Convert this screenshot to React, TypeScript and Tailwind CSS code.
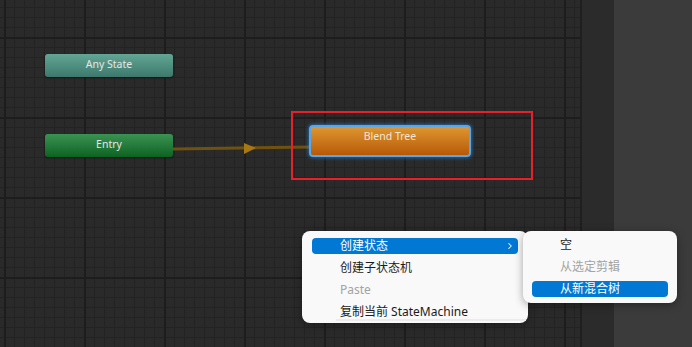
import { ChevronRight } from "lucide-react";

const grid =
  "bg-[#2a2a2a] bg-[linear-gradient(to_right,#1d1d1d_2px,transparent_2px),linear-gradient(to_bottom,#1d1d1d_2px,transparent_2px),linear-gradient(to_right,#232323_1px,transparent_1px),linear-gradient(to_bottom,#232323_1px,transparent_1px)] bg-size-[80px_80px,80px_80px,10px_10px,10px_10px] bg-position-[4px_37px]";

type Item = { label: string; disabled?: boolean; active?: boolean; sub?: boolean };

const mainItems: Item[] = [
  { label: "创建状态", active: true, sub: true },
  { label: "创建子状态机" },
  { label: "Paste", disabled: true },
  { label: "复制当前 StateMachine" },
];

const subItems: Item[] = [
  { label: "空" },
  { label: "从选定剪辑", disabled: true },
  { label: "从新混合树", active: true },
];

function MenuRow({ item, inset }: { item: Item; inset: string }) {
  return (
    <div className={`${inset} py-[3px]`}>
      <div
        className={`flex h-[16px] items-center rounded-[4px] pl-[28px] pr-[3px] text-[12px] leading-none ${
          item.active ? "bg-[#0078d4] text-white" : item.disabled ? "text-[#a3a3a3]" : "text-[#1b1b1b]"
        }`}
      >
        <span className="flex-1 whitespace-nowrap">{item.label}</span>
        {item.sub ? <ChevronRight className="h-[10px] w-[10px]" strokeWidth={2.5} /> : null}
      </div>
    </div>
  );
}

function StateNode({ label, tone, className }: { label: string; tone: string; className: string }) {
  return (
    <div
      className={`absolute flex h-[23px] w-[128px] items-center justify-center rounded-[3px] pb-[2px] text-[10.5px] text-[#e6e6e6] shadow-[0_1px_2px_rgba(0,0,0,0.5)] ${tone} ${className}`}
    >
      {label}
    </div>
  );
}

export default function App() {
  return (
    <div className="flex h-[347px] w-[692px] overflow-hidden font-['Noto_Sans','Noto_Sans_CJK_SC',sans-serif]">
      <div className={`relative h-full w-[580px] ${grid}`}>
        <StateNode
          label="Any State"
          tone="bg-linear-to-b from-[#63a695] to-[#3c796c]"
          className="left-[45px] top-[54px]"
        />
        <StateNode
          label="Entry"
          tone="bg-linear-to-b from-[#3a9352] to-[#0b6322]"
          className="left-[45px] top-[134px]"
        />

        <svg className="absolute left-0 top-0" width="580" height="347">
          <line x1="173" y1="149" x2="310" y2="147" stroke="#6f5210" strokeWidth="3" />
          <polygon points="244,143 256,148 244,154" fill="#a87812" />
        </svg>

        <div className="absolute left-[309px] top-[125px] h-[32px] w-[162px] rounded-[4px] border-2 border-[#5aa6e6] bg-linear-to-b from-[#de962f] to-[#b75904] pt-[2px] text-center text-[10.5px] leading-[14px] text-[#f2e6d6] shadow-[0_0_4px_#2f86d6]">
          Blend Tree
        </div>

        <div className="absolute left-[291px] top-[111px] h-[69px] w-[242px] border-2 border-[#e8202a]" />
      </div>

      <div className="h-full w-[2px] bg-[#1f1f1f]" />
      <div className="h-full w-[32px] bg-[#2b2b2b]" />
      <div className="h-full flex-1 bg-[#3b3b3b]" />

      <div className="absolute left-[302px] top-[231px] h-[92px] w-[226px] rounded-[8px] bg-[#f9f9f9] pt-[4px] shadow-[0_2px_8px_rgba(0,0,0,0.35)]">
        {mainItems.map((item) => (
          <MenuRow key={item.label} item={item} inset="px-[10px]" />
        ))}
        <div className="absolute bottom-[2px] left-[34px] right-[2px] h-[2px] bg-[#ececec]" />
      </div>

      <div className="absolute left-[523px] top-[231px] w-[154px] rounded-[8px] bg-[#f9f9f9] pb-[3px] pt-[3px] shadow-[0_2px_8px_rgba(0,0,0,0.35)]">
        {subItems.map((item) => (
          <MenuRow key={item.label} item={item} inset="px-[9px]" />
        ))}
      </div>
    </div>
  );
}
